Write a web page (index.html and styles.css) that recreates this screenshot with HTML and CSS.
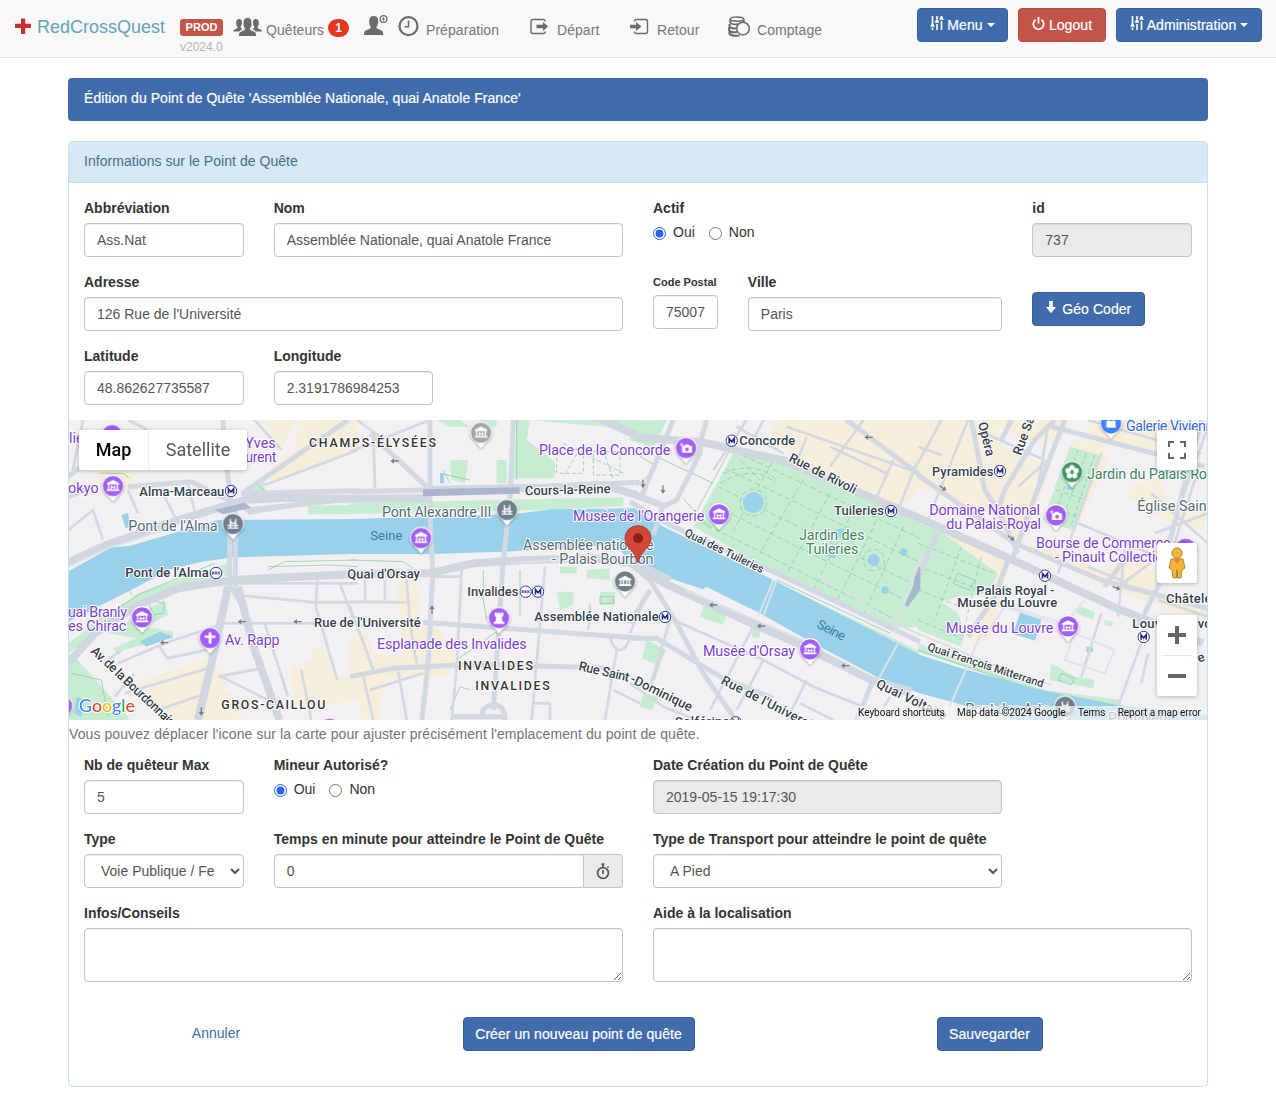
FILE: index.html
```html
<!DOCTYPE html>
<html lang="fr">
<head>
<meta charset="utf-8">
<title>RedCrossQuest</title>
<link rel="stylesheet" href="styles.css">
</head>
<body>
<nav class="navbar">
  <a class="brand">
    <svg width="16" height="16" viewBox="0 0 16 16"><path fill="#c9302c" d="M6 .5h4.2v5.3H16V10h-5.8v6H6v-6H0V5.800h6z"/></svg>
    <span>RedCrossQuest</span>
  </a>
  <div class="env"><span class="env-label">PROD</span><span class="version">v2024.0</span></div>
  <a class="nav-item queteurs">
    <svg width="29" height="20" viewBox="0 0 29 20"><g fill="#6b6b6b"><path id="side" d="M0 14.500c0-1.500 1-2 2.500-2.600 1.300-.5 2-.8 2-2C3.300 8.500 3 6.500 3.200 5c.2-2 1.300-3 2.900-3 1.800 0 2.600 1 2.800 2.600C9.200 7 8.400 8.600 7.600 9.900c0 1.300.9 1.600 2.100 2.100-1.500.8-2.700 1.400-3.200 2.600z"/><use href="#side" transform="matrix(-1 0 0 1 29 0)"/><path stroke="#f8f8f8" d="M5.500 19.500c0-4 .7-4.500 3.200-5.600 1.700-.7 3-1 3-2.300-1.500-1.700-1.800-3.500-1.700-5.600C10 2.300 11.700.5 14.500.5S19 2.300 19 6c.1 2.100-.2 3.900-1.700 5.600 0 1.300 1.300 1.600 3 2.300 2.500 1.100 3.200 1.600 3.200 5.600z"/></g></svg>
    <span>Quêteurs</span><b class="count">1</b>
  </a>
  <a class="nav-item add-user">
    <svg width="25" height="22" viewBox="0 0 25 22"><path fill="#6b6b6b" d="M0 21c0-4 1-4.500 4-5.600 1.800-.7 2.900-1.100 2.900-2.400C5.400 11.300 5.200 9 5.200 7c0-3.500 1.700-5 4.500-5s4.500 1.500 4.500 5c0 2-.3 4.300-1.800 6 0 1.300 1.100 1.700 2.900 2.400 3 1.100 4 1.600 4 5.600z"/><circle cx="19.500" cy="5" r="3.400" fill="none" stroke="#6b6b6b" stroke-width="1.300"/><path stroke="#6b6b6b" d="M17.800 5h3.400M19.500 3.300v3.400"/></svg>
  </a>
  <a class="nav-item preparation">
    <svg width="21" height="21" viewBox="0 0 21 21"><circle cx="10.500" cy="10.200" r="9" fill="none" stroke="#6b6b6b" stroke-width="2.200"/><path fill="none" stroke="#6b6b6b" stroke-width="1.500" d="M10.500 4.500v6.300H6.500"/></svg>
    <span>Préparation</span>
  </a>
  <a class="nav-item depart">
    <svg width="19" height="18" viewBox="0 0 19 18"><path fill="none" stroke="#6b6b6b" stroke-width="1.400" d="M15.300 3.500a2 2 0 0 0-2-2H3a2 2 0 0 0-2 2v10a2 2 0 0 0 2 2h10.300a2 2 0 0 0 2-2"/><path fill="#6b6b6b" d="M6.500 6.800H13V4l5.200 4.500L13 13v-2.800H6.500z"/></svg>
    <span>Départ</span>
  </a>
  <a class="nav-item retour">
    <svg width="19" height="18" viewBox="0 0 19 18"><path fill="none" stroke="#6b6b6b" stroke-width="1.400" d="M4.500 3.500a2 2 0 0 1 2-2h9a2 2 0 0 1 2 2v10a2 2 0 0 1-2 2h-9a2 2 0 0 1-2-2"/><path fill="#6b6b6b" d="M0 6.800h6V4l5.500 4.500L6 13v-2.800H0z"/></svg>
    <span>Retour</span>
  </a>
  <a class="nav-item comptage">
    <svg width="22" height="21" viewBox="0 0 22 21"><g fill="#f8f8f8" stroke="#6b6b6b" stroke-width="1.500"><path d="M1.500 15v3c2 2 6 2 10 1.500M1 11.500V14c1 2 5 2.500 8 2M1.500 8v2.500c1 2 6 2.500 9 1.800M2.200 3.500v3c1 2.500 12 2.500 13.500 0v-3" stroke-width="2"/><ellipse cx="9" cy="3.100" rx="6.800" ry="2.200"/><circle cx="15" cy="12.600" r="6.300"/></g></svg>
    <span>Comptage</span>
  </a>
  <div class="nav-actions">
    <button class="btn menu"><svg class="sliders" width="14" height="15"><use href="#sliders"/></svg>Menu<i class="caret"></i></button>
    <button class="btn danger"><svg class="power" width="13" height="14" viewBox="0 0 13 14"><path fill="none" stroke="#fff" stroke-width="1.700" d="M3.600 2.800a5.200 5.200 0 1 0 5.800 0M6.500 0v6.500"/></svg>Logout</button>
    <button class="btn admin"><svg class="sliders" width="14" height="15"><use href="#sliders"/></svg>Administration<i class="caret"></i></button>
  </div>
</nav>
<svg class="defs" width="0" height="0">
  <symbol id="sliders" viewBox="0 0 14 15"><path stroke="#fff" stroke-width="1.600" fill="none" d="M2.500 0v8M2.500 11.500V14M7 0v3.500M7 8v6M11.500 0v1M11.500 5v9M.5 10h4M5 6h4M9.500 3h4M1.200 8.500h2.600M5.700 4.500h2.600M10.200 1.500h2.600"/></symbol>
  <symbol id="museum" viewBox="-20 -20 40 40"><path fill="#fff" d="M0-18-18-9v4h36v-4zM-15-5h4v15h-4zM11-5h4v15h-4zM-19 10h38v5h-38zM-7-2h4v4h6v-4h4v12H3V5h-6v5h-4z"/></symbol>
  <symbol id="bridge" viewBox="-20 -20 40 40"><path fill="none" stroke="#fff" stroke-width="4" d="M-8-15v27M8-15v27M-16 4h32M-16 12h32M-8-6q8 8 16 0"/></symbol>
  <symbol id="camera" viewBox="-20 -20 40 40"><path fill="#fff" d="M-12-6h7l3-5H8l3 5h7v20h-30z"/><circle cx="3" cy="4" r="5.500" fill="#a25df2"/><path stroke="#fff" stroke-width="3" d="M-18-10h10M-13-15v10"/></symbol>
  <symbol id="metro" viewBox="-20 -20 40 40"><circle r="18" fill="#fff" stroke="#252a8f" stroke-width="3"/><path fill="none" stroke="#252a8f" stroke-width="5" d="M-8 9V-7L0 3l8-10V9"/></symbol>
  <symbol id="rer" viewBox="-20 -20 40 40"><circle r="18" fill="#fff" stroke="#252a8f" stroke-width="3"/><path stroke="#6367b5" stroke-width="9" stroke-dasharray="7 2" d="M-13 0h26"/></symbol>
  <symbol id="pin" viewBox="-36 -36 72 88"><path d="M-34 0a34 34 0 1 1 68 0c0 20-21 27-29 42q-5 8-10 0C-13 27-34 20-34 0z" fill="#fff"/><circle r="30.500" fill="currentColor"/></symbol>
  <symbol id="arrow" viewBox="-14 -10 28 20"><path fill="#7b7f83" d="M-13 0-2-8v6h14v4H-2v6z"/></symbol>
</svg>

<main class="container">
  <div class="page-title">Édition du Point de Quête 'Assemblée Nationale, quai Anatole France'</div>
  <form class="panel">
    <header class="panel-heading">Informations sur le Point de Quête</header>
    <div class="panel-body">
      <div class="row">
        <div class="field c2"><label>Abbréviation</label><input value="Ass.Nat"></div>
        <div class="field c4"><label>Nom</label><input value="Assemblée Nationale, quai Anatole France"></div>
        <div class="field c4"><label>Actif</label><div class="radios"><input type="radio" name="actif" checked><span>Oui</span><input type="radio" name="actif"><span>Non</span></div></div>
        <div class="field c2"><label>id</label><input value="737" disabled></div>
      </div>
      <div class="row">
        <div class="field c6"><label>Adresse</label><input value="126 Rue de l'Université"></div>
        <div class="field c1 postal"><label>Code Postal</label><input value="75007"></div>
        <div class="field c3"><label>Ville</label><input value="Paris"></div>
        <div class="field c2 geo"><button type="button" class="btn"><svg width="10" height="13" viewBox="0 0 10 13"><path fill="#fff" d="M3.200 0h3.600v6H10l-5 6.200L0 6h3.200z"/></svg>Géo Coder</button></div>
      </div>
      <div class="row">
        <div class="field c2"><label>Latitude</label><input value="48.862627735587"></div>
        <div class="field c2"><label>Longitude</label><input value="2.3191786984253"></div>
      </div>

      <div class="map">
        <svg class="map-canvas" viewBox="3 0 3414 900" preserveAspectRatio="none">
          <rect width="3420" height="900" fill="#f2f0f2"/>
          <g class="blocks">
            <path d="M590 0h95l-50 95zM690 0h180v95l-250 95-30-30 90-70zM90 150h110v60H90zM200 790l220-75 60 60-40 125H290zM670 745l60-25v-40l45 5 30 80 65 10v65l-190 30zM440 780l100 90-40 30h-80z"/>
            <g transform="translate(846)"><path d="M140 480h60l10 140 60 10 50 80-30 60-180 5-30 130H40L0 770V650l50-10 20 60 90 10z"/></g>
            <g transform="translate(1686)"><path d="M430 0h440v200l-60 80-120-60-30 10L425 55z"/></g>
            <g transform="translate(2550)"><path d="M0 0h170l20 90 60 140-60 50L0 200zM200 0h250l-20 60-80 10-110-50 10 60 150 60-90 240-75-60zM460 60l90 10 20 50-100 220-50-20zM60 320l220 90-60 230-50 50-20-60 60-90zM340 370l160 60 280 110 90 30v35l-240-80-340-155zM640 200l80-30 50 110 90-40v90l-120-30-110-70zM520 0h280v60L660 90 500 60zM560 450l70-60 100 90-60 60z"/></g>
          </g>
          <g class="parks">
            <path d="M520 215l70-50v55l-60 25zM720 257l150-2v28H720zM0 670l210-150 270-90v35l-150 35-130 60L0 700zM120 640l170-100 10 45-70 35 85 15v20l-150 35-10 15-20-20 70-30zM0 720h30l150 170v10H0z"/>
            <g transform="translate(846)"><path d="M0 250l820-18v26l-250 12L0 282zM500 0h370v50l-100-30-230-20-10 60 85 65v50H490zM260 0h70l30 20h-60zM300 120h55l-10 70-40-10zM440 120h30v70h-30zM390 0h50v20h-50zM620 515h50v40l-40 15zM710 450l70-5v35l-70-5zM630 440h50v20h-50zM750 515h45v40h-45z"/></g>
            <g transform="translate(1686)"><path d="M0 0h110L70 85 0 60zM320 80l150 30 400 200v310L790 625 440 460 190 320zM220 555l70 30-10 30-70-25zM370 620l25 10-10 25-20-5zM50 660l60 30-25 45-50-20zM40 820l45 10-20 40-35-10zM440 490l340 160 90 45-10 20-430-215z"/></g>
            <g transform="translate(2550)"><path d="M0 310l60 20 180 130-30 60-90 10-50 15 50 35 20 60-10 40L0 630zM455 80l90 25-80 225-90-30zM480 555l50 20-5 25-50-20zM560 600l25 5-2 15-25-5zM400 730l70 40 60 10-5 25-130-25zM0 670l380 140 230 30-10 20-220-40L0 695z"/></g>
          </g>
          <g class="garden-paths">
            <path d="M122 395l70 130M440 430L220 520 60 620M600 450l50-25 220-5M600 440l180-5 90 5M95 160h70l20 15M560 190l30 20M10 760l90 20 20 110M240 540l50 10-5 30-30 5z"/>
            <g transform="translate(846)"><path d="M0 420l160 5 30 20M280 150l20 40M270 160l90 20M400 450v90l10 60M510 450v140M320 720l120-85M300 870l30-70 30 10M500 0v180M750 530h40v20h-40z"/><path stroke-dasharray="12 7" d="M620 90h80v70h-80zM730 95h80v70h-80zM640 70l180 90M700 70l-60 100M760 90l30 90"/></g>
            <g transform="translate(1686)" stroke-dasharray="16 9"><path d="M315 95l555 260M285 145l580 280M265 200l570 285M240 250l575 285M210 305l580 290M440 105L310 330M520 180L390 400M600 220L470 460M680 250L550 510M750 280L620 545M820 320L700 585"/><circle cx="370" cy="248" r="40"/><circle cx="732" cy="420" r="32"/><path d="M270 190q100-60 170 0M280 160q100-40 160 20M330 120l60 60"/></g>
            <g transform="translate(1686)"><path d="M305 80L185 300M80 110l170 80M160 235l80 90M440 480l340 160M0 90l80 50-60 60"/></g>
            <g transform="translate(2550)" stroke-dasharray="14 9"><path d="M480 90l-80 220M505 100l-80 220M530 105l-70 210M435 150l90 30M415 210l90 30M400 260l80 30M0 370l230 90M0 440l190 70M0 510l130 50M60 340L0 480M130 380L50 600M190 410L130 660M0 600l120 50"/></g>
            <g transform="translate(2550)"><path d="M0 690l380 130 220 40M120 460l50 20-15 30-50-20zM430 760l40 15-10 20-40-15z"/></g>
          </g>
          <path class="water" d="M0 455L130 382 185 378 330 335 450 300 846 297 1086 290 1340 282 1450 268 1700 265 1786 320 2116 480 2556 705 2680 745 2920 810 3150 855 3420 885V900H2850L2650 845 2556 820 2426 770 2256 680 2076 580 1915 500 1905 508 1746 455 1690 425 1640 375 1306 395 1086 402 846 402 500 412 400 425 300 450 200 505 60 575 0 605z"/>
          <g class="water"><path d="M160 285l20-5 8 40-15 5zM215 665l60-30 40 15-80 30zM25 830l25 10-10 50-20-10zM2856 577l65 20-20 65-65-20zM3055 680h20v16h-20z"/><circle cx="2056" cy="248" r="31"/><circle cx="2417" cy="420" r="18"/><circle cx="2507" cy="396" r="11"/><circle cx="2451" cy="510" r="11"/><path d="M2300 330l25-5 10 20-20 10zM2280 400l25 5-5 10-20-5zM2997 195h24v14h-24zM1116 160h12v30h-12z"/></g>
          <g class="roads thin">
            <path d="M0 330l75-60 30 90M45 0L10 170M280 210l45 90M360 190l20 85M560 0l80 90M590 195l280-105M500 490h370M500 525l240 22h130M150 730l140-60 180-60h400M170 820l250-75M270 870l130-45M748 480l-5 80 65 220M590 610l70 220M815 490l55 140M450 770l130-25M460 770l160 80M275 680l22 35 140-30M120 720l40-30M200 760l-60 70M180 210l30 70M180 0l60 30M540 280l330-50M700 750l30 150"/>
            <g transform="translate(846)"><path d="M0 545l170 2M45 480v60M105 480v60M240 0L0 95M70 40l5 165M170 480l10 130 20 120M0 560l70 190M145 755l25 145M40 770l30 130M335 450l-15 290-15 160M330 470h-90M585 440l-40 460M780 650q10 40 30 40 20 0 30-40M800 690l-35 210M550 850h50v50M790 810l80 40M720 550l-5 80M20 0l70 50M60 810l160-50"/></g>
            <g transform="translate(1686)"><path d="M350 0L250 150M400 0l-25 50M320 20l140 80M470 20l400 140M530 50l-40 100M700 0L600 140M790 120L740 230M860 130L800 280M600 80l170 80M55 510L0 640M120 600L60 800M130 600l270 120 150 80 150 60M370 620L240 870M400 720l-80 150M530 780l-60 120M100 690L70 780M0 650l90 10M510 850l100 50M0 790l100 70 100 40M780 830l-40 70M720 780l150 60"/></g>
            <g transform="translate(2550)"><path d="M0 80l70 25M150 0L30 300M70 0L0 130M200 40l180 80M300 200l100-90M390 20l-30 180M510 0l340 100M550 100L420 460M480 310l360 150M620 390L600 590M700 220l170 150M870 20L760 330M600 500l110-80M840 150l-80 250M870 280l-160 60M510 440l120 50M550 580l-60 190M680 640L600 860M690 700l-20 90M720 540l150 50"/><path class="faint" d="M240 550l200 60 60-70M470 640l120 50-30 70-120-40zM200 650l60-90 150 50"/></g>
          </g>
          <g class="roads medium">
            <path d="M465 0l5 100 20 150M530 215L840 0M0 170L90 100M180 200l190-15 100 50 70 35 330-35M520 220l350-8M485 270v230M502 270v230M0 230l60-25M490 500l40 70"/>
            <g transform="translate(846)"><path d="M240 0v270l8 190-12 250-20 190M490 0l-10 240-20 180-30 450M60 40l170 160M220 607l650 48M0 770l130-25 190-10h110l330 8M0 215l220-5 280-5 370-18M400 890q-10-30 30-35 35 0 35 45M310 890h150"/></g>
            <g transform="translate(1686)"><path d="M130 0L30 240M230 0q-20 60-20 100L140 240l-40 20-80-30M650 0l220 165M0 215l100 40-30 90M0 655h80l200 120 150 60M0 610l60-100M730 780l-50 120M0 245l120 70 320 145 430 205M10 440l50 40 80 130 80 150 90 130"/></g>
            <g transform="translate(2550)"><path d="M160 0l40 210 40 60 60 130M440 0L320 310l-40 120M0 165l290 205 260 110 320 85M410 0l-60 60-90 150-20 60M400 20l460 120M850 0L720 500l-60 120M60 340L0 470M270 420l-40 110-80 120M640 390L560 500M280 0l-30 60"/></g>
          </g>
          <g class="roads major">
            <path d="M0 427l110-50 190-67 230-70 116-7 200 3 240-2M0 730l80-90 120-80 130-55 170-26 370-17 216-2 130-30 160-10 200-5 120 15 110 50M480 500l-40 190-50 210M510 500l50 190 75 210M1086 210l340-7 180-8 100 30"/>
            <path d="M1690 430l100 60 250 115 160 70 210 105 120 35M1470-45l135 45 120 55 170 10 260 60 400 170 280 125 300 140 270 110"/>
          </g>
          <path class="tunnels" d="M440 270l90-22 20 15-85 20zM1065 208l290-6v19l-290 8zM2510 555l25-55 10-60h12v70l-38 50z"/>
          <g class="quays"><path d="M0 440l110-52 190-62M2116 480L2070 590M2126 480l-42 112M2490 670l-60 110M2705 725L2640 870M1330 430l360-25M2250 465l240 150 260 110 200 70M2480 640l10-50 75-190M2700 730l40-90M1850 510l400 170"/></g>
          <g class="arrows">
            <use href="#arrow" x="508" y="595" width="28" height="20"/><use href="#arrow" x="675" y="595" width="28" height="20"/><use href="#arrow" x="275" y="658" width="28" height="20"/><use href="#arrow" x="1922" y="545" width="28" height="20"/><use href="#arrow" x="2066" y="608" width="28" height="20"/><use href="#arrow" x="2318" y="727" width="28" height="20"/><use href="#arrow" x="2388" y="42" width="28" height="20"/><use href="#arrow" x="966" y="113" width="28" height="20"/>
            <use href="#arrow" width="28" height="20" transform="translate(2630 220) rotate(215)"/><use href="#arrow" width="28" height="20" transform="translate(2835 370) rotate(215)"/><use href="#arrow" width="28" height="20" transform="translate(3155 518) rotate(200)"/><use href="#arrow" width="28" height="20" transform="translate(1715 205) rotate(-90)"/><use href="#arrow" width="28" height="20" transform="translate(1775 222) rotate(-90)"/><use href="#arrow" width="28" height="20" transform="translate(390 888) rotate(-90)"/><use href="#arrow" width="28" height="20" transform="translate(1102 555) rotate(90)"/>
          </g>
          <g class="street">
            <text x="214" y="227" textLength="255">Alma-Marceau</text><text x="172" y="472" textLength="250">Pont de l'Alma</text>
            <text x="838" y="476" textLength="218" transform="rotate(-.5 838 476)">Quai d'Orsay</text><text x="738" y="620" textLength="320">Rue de l'Université</text>
            <text x="1371" y="226" textLength="257" transform="rotate(-1.500 1371 226)">Cours-la-Reine</text>
            <text x="1198" y="529" textLength="153">Invalides</text><text x="1399" y="604" textLength="373">Assemblée Nationale</text>
            <text x="2014" y="76" textLength="168">Concorde</text><text x="2298" y="286" textLength="150">Tuileries</text>
            <text x="2592" y="167" textLength="184">Pyramides</text><text x="2725" y="524" textLength="234">Palais Royal -</text><text x="2668" y="562" textLength="300">Musée du Louvre</text>
            <text x="3294" y="550" textLength="150">Châtelet</text><text x="3193" y="625" textLength="260">Louvre - Rivoli</text>
            <text x="2160" y="122" textLength="222" transform="rotate(27 2160 122)">Rue de Rivoli</text>
            <text x="1847" y="346" textLength="260" transform="rotate(26 1847 346)" class="small">Quai des Tuileries</text>
            <text x="66" y="696" textLength="330" transform="rotate(43 66 696)">Av. de la Bourdonnais</text>
            <text x="1530" y="750" textLength="155" transform="rotate(13 1530 750)">Rue Saint</text><text x="1684" y="786" textLength="202" transform="rotate(26 1684 786)">-Dominique</text>
            <text x="1957" y="790" textLength="335" transform="rotate(27 1957 790)">Rue de l'Université</text>
            <text x="2422" y="800" textLength="230" transform="rotate(26 2422 800)">Quai Voltaire</text>
            <text x="2576" y="690" textLength="365" transform="rotate(18 2576 690)" class="small">Quai François Mitterrand</text>
            <text x="2730" y="10" transform="rotate(76 2730 10)">Opéra</text><text x="2859" y="108" transform="rotate(-70 2859 108)">Rue Sain</text><text x="3388" y="730" transform="rotate(-20 3388 730)">'e</text>
            <text x="1821" y="917" textLength="165">Solférino</text>
          </g>
          <g class="district"><text x="723" y="81" textLength="384">CHAMPS-ÉLYSÉES</text><text x="1170" y="749" textLength="228">INVALIDES</text><text x="1222" y="811" textLength="226">INVALIDES</text><text x="460" y="867" textLength="315">GROS-CAILLOU</text></g>
          <g class="poi purple">
            <text x="3" y="70">lie</text><text x="0" y="219" textLength="92">okyo</text><text x="532" y="84">Yves</text><text x="532" y="126" textLength="93">urent</text><text x="0" y="592" textLength="177">uai Branly</text><text x="0" y="634" textLength="175">es Chirac</text><text x="471" y="676" textLength="164">Av. Rapp</text><text x="927" y="688" textLength="449">Esplanade des Invalides</text><text x="1413" y="106" textLength="394">Place de la Concorde</text><text x="1515" y="304" textLength="394">Musée de l'Orangerie</text><text x="1905" y="709" textLength="276">Musée d'Orsay</text><text x="2584" y="286" textLength="332">Domaine National</text><text x="2635" y="328" textLength="284">du Palais-Royal</text><text x="2904" y="384" textLength="404">Bourse de Commerce</text><text x="2960" y="426" textLength="350">- Pinault Collection</text><text x="2634" y="640" textLength="322">Musée du Louvre</text>
          </g>
          <g class="poi gray"><text x="181" y="334" textLength="268">Pont de l'Alma</text><text x="942" y="292" textLength="328">Pont Alexandre III</text><text x="1365" y="391" textLength="392">Assemblée nationale</text><text x="1452" y="432" textLength="304">- Palais Bourbon</text><text x="3208" y="273">Église Saint-E</text><text x="2692" y="882" textLength="252">Pont des Arts</text><text x="3120" y="909">Pont Neuf</text></g>
          <g class="poi green"><text x="2193" y="361" textLength="196">Jardin des</text><text x="2213" y="403" textLength="158">Tuileries</text><text x="3057" y="178" textLength="360">Jardin du Palais Ro</text></g>
          <text class="poi blue" x="3174" y="32" textLength="262">Galerie Vivienn</text>
          <g class="river"><text x="907" y="361" textLength="96">Seine</text><text x="2244" y="622" textLength="90" transform="rotate(27 2244 622)">Seine</text></g>
          <g><use href="#metro" x="470" y="194" width="38" height="38"/><use href="#rer" x="425" y="440" width="38" height="38"/><use href="#rer" x="1354" y="496" width="38" height="38"/><use href="#metro" x="1391" y="496" width="38" height="38"/><use href="#metro" x="1772" y="572" width="38" height="38"/><use href="#metro" x="1972" y="43" width="38" height="38"/><use href="#metro" x="2450" y="254" width="38" height="38"/><use href="#metro" x="2777" y="134" width="38" height="38"/><use href="#metro" x="2912" y="448" width="38" height="38"/><use href="#metro" x="3208" y="632" width="38" height="38"/><use href="#metro" x="1984" y="888" width="38" height="38"/></g>
          <g class="pins">
            <g transform="translate(132 45)"><use href="#pin" x="-36" y="-36" width="72" height="88"/></g>
            <g transform="translate(135 198)"><use href="#pin" x="-36" y="-36" width="72" height="88"/><use href="#museum" x="-20" y="-20" width="40" height="40"/></g>
            <g transform="translate(222 592)"><use href="#pin" x="-36" y="-36" width="72" height="88"/><use href="#museum" x="-20" y="-20" width="40" height="40"/></g>
            <g transform="translate(426 654)"><use href="#pin" x="-36" y="-36" width="72" height="88"/><path fill="none" stroke="#fff" stroke-width="8" d="M0-17v34M-16-4h32"/></g>
            <g transform="translate(1059 354)"><use href="#pin" x="-36" y="-36" width="72" height="88"/><use href="#museum" x="-20" y="-20" width="40" height="40"/></g>
            <g transform="translate(1293 594)"><use href="#pin" x="-36" y="-36" width="72" height="88"/><path fill="#fff" d="M-13-17h7v5h3v-5h6v5h3v-5h7v11l-5 4 3 13h5v7h-32v-7h5l3-13-5-4z"/></g>
            <g transform="translate(1854 84)"><use href="#pin" x="-36" y="-36" width="72" height="88"/><use href="#camera" x="-20" y="-20" width="40" height="40"/></g>
            <g transform="translate(1953 283)"><use href="#pin" x="-36" y="-36" width="72" height="88"/><use href="#museum" x="-20" y="-20" width="40" height="40"/></g>
            <g transform="translate(2226 688)"><use href="#pin" x="-36" y="-36" width="72" height="88"/><use href="#museum" x="-20" y="-20" width="40" height="40"/></g>
            <g transform="translate(2964 286)"><use href="#pin" x="-36" y="-36" width="72" height="88"/><use href="#camera" x="-20" y="-20" width="40" height="40"/></g>
            <g transform="translate(3000 619)"><use href="#pin" x="-36" y="-36" width="72" height="88"/><use href="#museum" x="-20" y="-20" width="40" height="40"/></g>
            <g transform="translate(3353 386)"><use href="#pin" x="-36" y="-36" width="72" height="88"/></g>
            <g transform="translate(-18 858)"><use href="#pin" x="-36" y="-36" width="72" height="88"/></g>
            <g transform="translate(785 926)"><use href="#pin" x="-36" y="-36" width="72" height="88"/></g>
            <g class="slate" transform="translate(495 312)"><use href="#pin" x="-36" y="-36" width="72" height="88"/><use href="#bridge" x="-20" y="-20" width="40" height="40"/></g>
            <g class="slate" transform="translate(1317 270)"><use href="#pin" x="-36" y="-36" width="72" height="88"/><use href="#bridge" x="-20" y="-20" width="40" height="40"/></g>
            <g class="slate" transform="translate(1671 484)"><use href="#pin" x="-36" y="-36" width="72" height="88"/><path fill="#fff" d="M0-17-19-7v4h38v-4zM-15-3h4v12h-4zM-7-3h4v12h-4zM3-3h4v12h-4zM11-3h4v12h-4zM-18 9h36v5h-36z"/></g>
            <g class="slate" transform="translate(2991 860)"><use href="#pin" x="-36" y="-36" width="72" height="88"/><use href="#bridge" x="-20" y="-20" width="40" height="40"/></g>
            <g class="light" transform="translate(1239 38)"><use href="#pin" x="-36" y="-36" width="72" height="88"/><use href="#museum" x="-20" y="-20" width="40" height="40"/></g>
            <g class="shop" transform="translate(3129 10)"><use href="#pin" x="-36" y="-36" width="72" height="88"/><path fill="#fff" d="M-14-7h28v20h-28z"/><path fill="none" stroke="#fff" stroke-width="4" d="M-7-7v-8H7v8"/></g>
            <g class="garden" transform="translate(3012 156)"><use href="#pin" x="-36" y="-36" width="72" height="88"/><g fill="#fff"><circle cy="-13" r="8"/><circle cx="12" cy="-4" r="8"/><circle cx="8" cy="11" r="8"/><circle cx="-8" cy="11" r="8"/><circle cx="-12" cy="-4" r="8"/></g><circle r="5" fill="#3d9467"/></g>
          </g>
          <path d="M1710 428c-5-32-39-45-39-74a39 37 0 0 1 78 0c0 29-34 42-39 74z" fill="#d34836" stroke="#b13a2c" stroke-width="3"/><circle cx="1710" cy="355" r="15" fill="#8c1f17"/>
          <path fill="#f5f5f5" opacity=".7" d="M2366 858h1054v42H2366z"/>
          <g class="credits"><text x="2370" y="887" textLength="260">Keyboard shortcuts</text><text x="2667" y="887" textLength="326">Map data ©2024 Google</text><text x="3030" y="887" textLength="82">Terms</text><text x="3149" y="887" textLength="250">Report a map error</text></g>
          <text class="google" x="33" y="877" textLength="168" lengthAdjust="spacingAndGlyphs"><tspan fill="#4285f4">G</tspan><tspan fill="#ea4335">o</tspan><tspan fill="#fbbc04">o</tspan><tspan fill="#4285f4">g</tspan><tspan fill="#34a853">l</tspan><tspan fill="#ea4335">e</tspan></text>
        </svg>
        <div class="map-types"><b>Map</b><span>Satellite</span></div>
        <div class="map-control fullscreen"><svg width="18" height="18" viewBox="0 0 18 18"><path fill="none" stroke="#666" stroke-width="2" d="M1 6V1h5M12 1h5v5M17 12v5h-5M6 17H1v-5"/></svg></div>
        <div class="map-control person"><svg width="18" height="32" viewBox="0 0 18 32"><g fill="#f4b43a" stroke="#97792d" stroke-width=".8"><path d="M3 12h12l2 9-3 2-1 8H9.500V23h-1v8H5L4 23l-3-2z"/><circle cx="9" cy="6" r="5.200"/></g><path fill="#df8b2d" d="M5 11.500h8L9 17z"/></svg></div>
        <div class="map-control zooms"><svg width="40" height="81" viewBox="0 0 40 81"><path stroke="#666" stroke-width="4" d="M11 20h18M20 11v18M11 61h18"/><path stroke="#e6e6e6" d="M5 40.500h30"/></svg></div>
      </div>
      <p class="help">Vous pouvez déplacer l'icone sur la carte pour ajuster précisément l'emplacement du point de quête.</p>

      <div class="row">
        <div class="field c2"><label>Nb de quêteur Max</label><input value="5"></div>
        <div class="field c4"><label>Mineur Autorisé?</label><div class="radios"><input type="radio" name="mineur" checked><span>Oui</span><input type="radio" name="mineur"><span>Non</span></div></div>
        <div class="field c4"><label>Date Création du Point de Quête</label><input value="2019-05-15 19:17:30" disabled></div>
      </div>
      <div class="row">
        <div class="field c2"><label>Type</label><select><option>Voie Publique / Feux Rouge</option></select></div>
        <div class="field c4"><label>Temps en minute pour atteindre le Point de Quête</label><div class="input-group"><input value="0"><span class="addon"><svg width="14" height="17" viewBox="0 0 14 17"><g fill="none" stroke="#555" stroke-width="1.700"><circle cx="7" cy="10" r="5.400"/><path d="M7 7v4M5.500 1.200h3M7 1v3M11.500 3.500l1 1"/></g></svg></span></div></div>
        <div class="field c4"><label>Type de Transport pour atteindre le point de quête</label><select><option>A Pied</option></select></div>
      </div>
      <div class="row">
        <div class="field c6"><label>Infos/Conseils</label><textarea></textarea></div>
        <div class="field c6"><label>Aide à la localisation</label><textarea></textarea></div>
      </div>
      <div class="actions">
        <div><a class="cancel">Annuler</a></div>
        <div><button type="button" class="btn create">Créer un nouveau point de quête</button></div>
        <div><button type="button" class="btn save">Sauvegarder</button></div>
      </div>
    </div>
  </form>
</main>
</body>
</html>
```
FILE: styles.css
```css
* { box-sizing: border-box; }
body { margin: 0; background: #fff; color: #333; font: 14px/20px "Liberation Sans", Arial, sans-serif; }
svg { display: block; flex: none; }
.defs { position: absolute; }

.navbar { display: flex; align-items: flex-start; height: 58px; margin-bottom: 20px; padding: 0 14px 0 15px; background: #f8f8f8; border-bottom: 1px solid #e3e3e3; white-space: nowrap; }
.brand { display: flex; gap: 6px; width: 165px; padding-top: 17px; color: #62a5b8; font-size: 18px; }
.brand svg { margin-top: 1px; }
.env { display: flex; flex-direction: column; width: 53px; padding-top: 19px; }
.env-label { width: 43px; height: 17px; border-radius: 3px; background: #c3544a; color: #fff; font-size: 11px; font-weight: bold; line-height: 17px; text-align: center; }
.version { color: #b5b5b5; font-size: 12px; line-height: 22px; }
.nav-item { display: flex; color: #777; letter-spacing: .06px; }
.nav-item span { padding-top: 20px; }
.queteurs { width: 131px; gap: 4px; }
.queteurs svg { margin-top: 17px; }
.count { width: 21px; height: 18px; margin: 19px 0 0 0; border-radius: 9px; background: #e8351d; color: #fff; font-size: 12px; line-height: 18px; text-align: center; }
.add-user { width: 34px; padding-top: 14px; }
.preparation { width: 132px; gap: 7px; }
.preparation svg { margin-top: 16px; }
.depart { width: 100px; gap: 8px; }
.depart svg, .retour svg { margin-top: 18px; }
.retour { width: 98px; gap: 8px; }
.comptage { gap: 7px; }
.comptage svg { margin-top: 16px; }
.nav-actions { display: flex; gap: 10px; margin: 8px 0 0 auto; }
.nav-actions .btn { padding: 0; }

.btn { display: inline-flex; align-items: center; justify-content: center; height: 34px; padding: 0 12px; border: 1px solid #395f9a; border-radius: 4px; background: #406cab; color: #fff; font: inherit; letter-spacing: .06px; white-space: nowrap; -webkit-text-stroke: .2px #fff; }
.btn.danger { width: 88px; border-color: #b74b40; background: #c3544a; }
.menu { width: 91px; }
.admin { width: 146px; }
.create { width: 232px; }
.save { width: 106px; }
.sliders { margin-right: 3px; margin-bottom: 3px; }
.power { margin-right: 4px; margin-bottom: 3px; }
.caret { margin-left: 4px; border: 4px solid transparent; border-top-color: #fff; border-bottom: 0; }

.container { width: 1140px; margin: 0 auto; }
.page-title { height: 43px; margin-bottom: 20px; padding: 10px 16px; border-radius: 4px; background: #406cab; color: #fff; letter-spacing: .05px; -webkit-text-stroke: .2px #fff; }
.panel { height: 946px; border: 1px solid #c0e2ed; border-radius: 4px; }
.panel-heading { height: 41px; padding: 9px 15px; border-bottom: 1px solid #c0e2ed; border-radius: 3px 3px 0 0; background: #d8e8f4; color: #40708e; letter-spacing: .04px; }
.panel-body { padding-top: 15px; }
.row { display: grid; grid-template-columns: repeat(12, 1fr); }
.field { min-width: 0; padding: 0 15px 15px; }
.c1 { grid-column: span 1; }
.c2 { grid-column: span 2; }
.c3 { grid-column: span 3; }
.c4 { grid-column: span 4; }
.c6 { grid-column: span 6; }
label { display: block; height: 20px; margin-bottom: 5px; font-weight: bold; white-space: nowrap; }
.field > input, .input-group input, select, textarea { display: block; width: 100%; height: 34px; margin: 0; padding: 6px 12px; border: 1px solid #c4c4c4; border-radius: 4px; background: #fff; box-shadow: inset 0 1px 1px rgba(0, 0, 0, .075); color: #555; font: inherit; }
input:disabled { background: #eaeaea !important; }
textarea { height: 54px; resize: vertical; }
.radios { display: flex; height: 20px; color: #333; }
.radios input { width: 13px; height: 13px; margin: 4px 7px 0 0; accent-color: #2962f5; }
.radios span { margin: -1px 14px 0 0; }
.postal label { height: 20px; margin-bottom: 3px; font-size: 11px; }
.postal > input { padding-right: 6px; }
.geo { padding-top: 20px; }
.geo .btn { width: 113px; padding: 0; }
.geo svg { margin: 0 6px 3px 0; }
.input-group { display: flex; }
.input-group input { flex: 1; border-radius: 4px 0 0 4px; }
.addon { display: flex; align-items: center; justify-content: center; width: 39px; height: 34px; border: 1px solid #c4c4c4; border-left: 0; border-radius: 0 4px 4px 0; background: #eaeaea; }
.help { margin: 0; padding: 4px 0 11px; color: #737373; letter-spacing: .09px; }
.actions { display: grid; grid-template-columns: 294px 431px 391px; padding-top: 20px; text-align: center; }
.actions > div { display: flex; justify-content: center; }
.cancel { line-height: 32px; color: #406cab; }

.map { position: relative; height: 300px; overflow: hidden; font-family: Roboto, sans-serif; }
.map-canvas { width: 1138px; height: 300px; }
.blocks { fill: #f6edda; }
.parks { fill: #c6ecd1; }
.water { fill: #99d1eb; }
.tunnels { fill: #aab5d0; }
.garden-paths { fill: none; stroke: #8fcfae; stroke-width: 2.5; }
.roads { fill: none; stroke: #d2d9e2; stroke-linejoin: round; }
.thin { stroke-width: 8; }
.faint { stroke: #e2e3e8; stroke-width: 6; }
.medium { stroke-width: 15; }
.major { stroke: #d0d7e1; stroke-width: 24; }
.quays { fill: none; stroke: #dde0e6; stroke-width: 6; }
.map-canvas text { paint-order: stroke; stroke: #fff; stroke-width: 6px; stroke-linejoin: round; }
.street { fill: #35404d; font-size: 39px; font-weight: 500; }
.street .small { font-size: 34px; }
.district { fill: #333; font-size: 37px; font-weight: 500; letter-spacing: 3px; }
.poi { font-size: 43px; }
.purple { fill: #7b40d0; }
.gray { fill: #566a78; }
.green { fill: #3c8661; }
.blue { fill: #3467d6; }
.river { fill: #377f9c; font-size: 39px; }
.map-canvas .river text { stroke: none; }
.pins { color: #a25df2; filter: drop-shadow(0 3px 3px rgba(0, 0, 0, .3)); }
.slate { color: #6f808c; }
.light { color: #a3a5a8; }
.shop { color: #3e82f7; }
.garden { color: #3d9467; }
.map-canvas .credits text { stroke: none; }
.credits { font-size: 30px; fill: #111; }
.google { font: 500 54px Lato, "Open Sans", sans-serif; }
.map-types { position: absolute; top: 10px; left: 10px; display: flex; width: 168px; height: 40px; background: #fff; box-shadow: 0 1px 4px rgba(0, 0, 0, .25); border-radius: 2px; color: #565656; font-size: 18px; line-height: 40px; text-align: center; }
.map-types b { width: 70px; border-right: 1px solid #eee; color: #000; font-weight: 500; }
.map-types span { flex: 1; }
.map-control { position: absolute; right: 10px; display: flex; align-items: center; justify-content: center; width: 40px; height: 40px; border-radius: 2px; background: #fff; box-shadow: 0 1px 4px rgba(0, 0, 0, .25); }
.fullscreen { top: 10px; }
.person { top: 123px; }
.zooms { top: 195px; height: 81px; }
```
